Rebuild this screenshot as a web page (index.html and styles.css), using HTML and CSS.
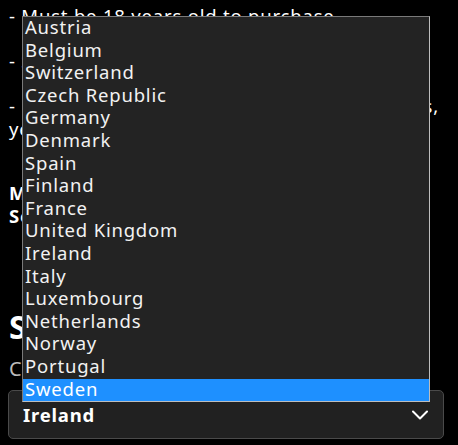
FILE: index.html
```html
<!DOCTYPE html>
<html lang="en">
<head>
<meta charset="utf-8">
<title>Country select</title>
<link rel="stylesheet" href="styles.css">
</head>
<body>
<main class="page">
  <p class="line gap-after">- Must be 18 years old to purchase</p>
  <p class="line gap-after">- Ships within 2-3 business days</p>
  <p class="line justified">- Contains alcohol, for adults 18s,</p>
  <p class="line">years of age only, ID may be required</p>
  <p class="line strong first-strong">Minimum order: 1 bottle</p>
  <p class="line strong">Sold by the Distillery</p>
  <h2 class="heading">Shipping</h2>
  <label class="field-label" for="country">Country</label>
  <div class="select" id="country">
    <span class="select-value">Ireland</span>
    <svg class="chevron" width="16" height="10" viewBox="0 0 16 10" aria-hidden="true"><path d="M1 1.5 L8 8.5 L15 1.5" fill="none" stroke="#fff" stroke-width="2" stroke-linecap="round" stroke-linejoin="round"/></svg>
  </div>
</main>
<ul class="listbox" role="listbox">
  <li class="option">Austria</li>
  <li class="option">Belgium</li>
  <li class="option">Switzerland</li>
  <li class="option">Czech Republic</li>
  <li class="option">Germany</li>
  <li class="option">Denmark</li>
  <li class="option">Spain</li>
  <li class="option">Finland</li>
  <li class="option">France</li>
  <li class="option">United Kingdom</li>
  <li class="option">Ireland</li>
  <li class="option">Italy</li>
  <li class="option">Luxembourg</li>
  <li class="option">Netherlands</li>
  <li class="option">Norway</li>
  <li class="option">Portugal</li>
  <li class="option selected">Sweden</li>
</ul>
</body>
</html>
```
FILE: styles.css
```css
html, body {
  margin: 0;
  padding: 0;
  background: #000;
}
body {
  color: #fff;
  font-family: "Noto Sans", "DejaVu Sans", sans-serif;
  font-size: 18.5px;
  letter-spacing: 0.8px;
  width: 458px;
  height: 445px;
  overflow: hidden;
  position: relative;
}
.page {
  padding: 4px 19px 0 8px;
}
.line {
  margin: 0;
  line-height: 23px;
  white-space: nowrap;
  padding-left: 1px;
}
.justified {
  text-align: justify;
  text-align-last: justify;
  white-space: normal;
}
.gap-after {
  margin-bottom: 22px;
}
.strong {
  font-weight: 700;
}
.first-strong {
  margin-top: 41px;
}
.heading {
  margin: 81px 0 0 0;
  font-size: 32px;
  line-height: 38px;
  font-weight: 700;
  letter-spacing: 0.5px;
  padding-left: 1px;
}
.field-label {
  display: block;
  margin-top: 10px;
  color: #bbb;
  font-size: 20px;
  line-height: 26px;
  padding-left: 1px;
}
.select {
  margin-top: 8px;
  box-sizing: border-box;
  width: 436px;
  height: 49px;
  border: 1px solid #4a4a4a;
  border-radius: 5px;
  background: #212121;
  display: flex;
  align-items: center;
  justify-content: space-between;
  padding: 0 15px 0 14px;
}
.select-value {
  font-weight: 700;
  font-size: 18.5px;
}
.chevron {
  display: block;
}
.listbox {
  position: absolute;
  left: 22px;
  top: 16px;
  width: 408px;
  box-sizing: border-box;
  margin: 0;
  padding: 0;
  list-style: none;
  background: #232323;
  border: 1px solid #bdbdbd;
  border-top-color: #7a7a7a;
  border-left-color: #7a7a7a;
}
.option {
  height: 22.6px;
  line-height: 20px;
  padding-left: 2px;
  color: #f2f2f2;
  white-space: nowrap;
}
.option.selected {
  background: #1e90ff;
  color: #fff;
}
```
